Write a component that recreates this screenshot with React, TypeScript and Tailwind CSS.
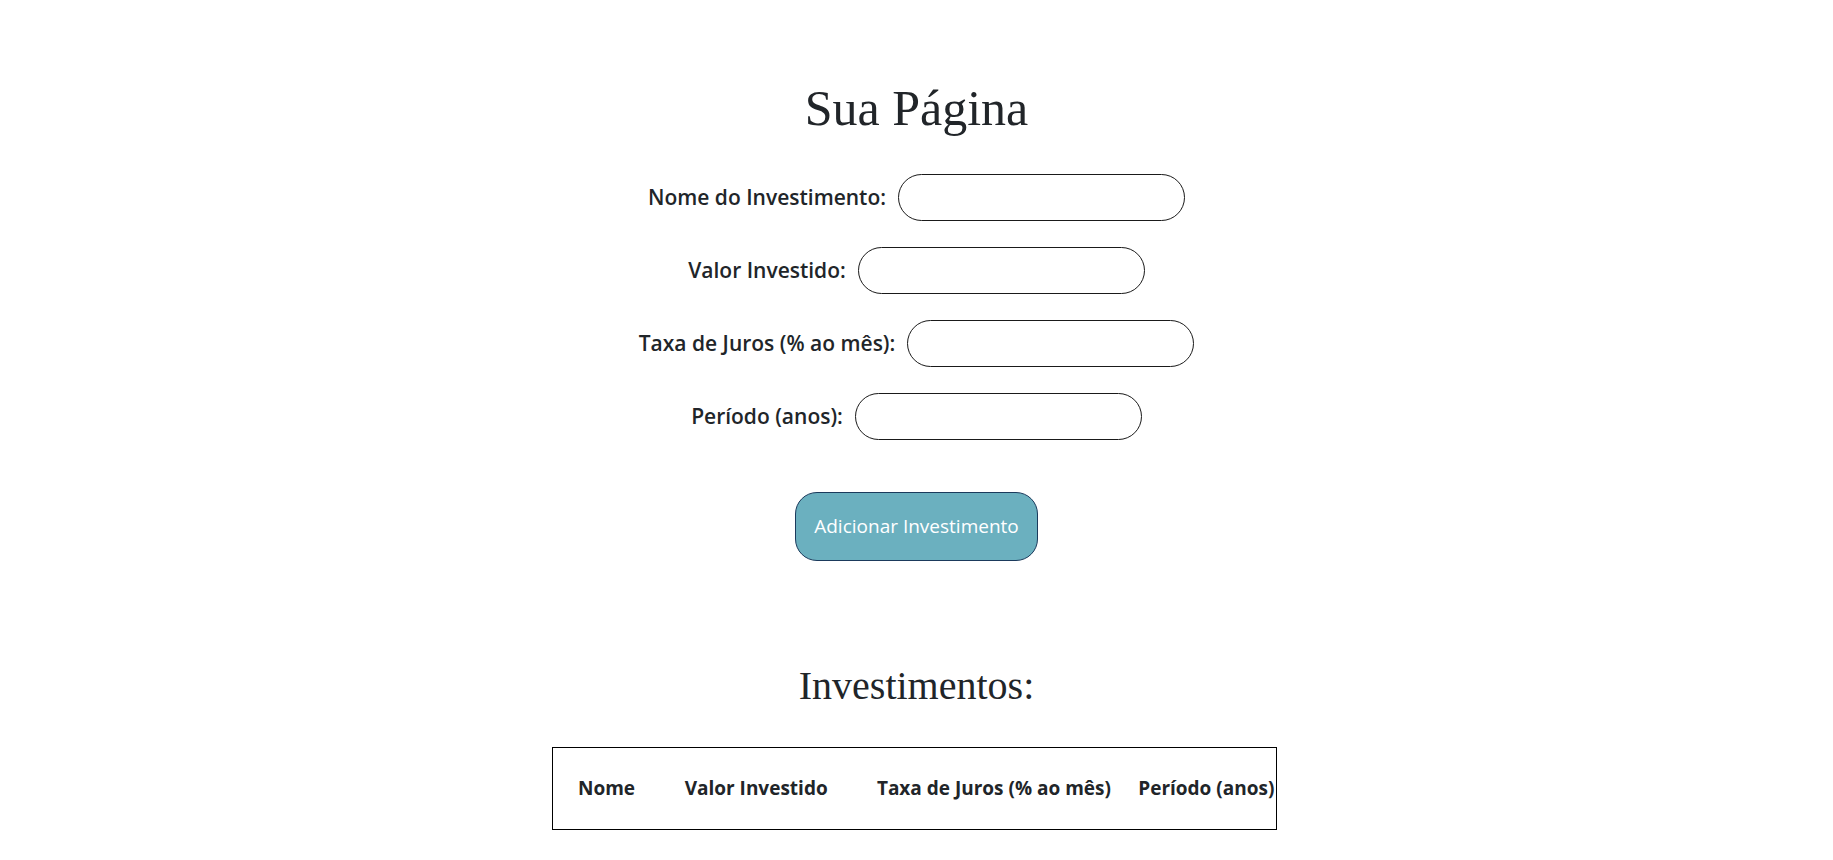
const fields = [
  { label: "Nome do Investimento:", name: "nome" },
  { label: "Valor Investido:", name: "valor" },
  { label: "Taxa de Juros (% ao mês):", name: "taxa" },
  { label: "Período (anos):", name: "periodo" },
];

const columns = [
  { title: "Nome", width: "w-[107px]" },
  { title: "Valor Investido", width: "w-[192px]" },
  { title: "Taxa de Juros (% ao mês)", width: "w-[261px]" },
  { title: "Período (anos)", width: "w-[163px]" },
];

export default function App() {
  return (
    <div className="min-h-screen bg-white text-[#212529] font-['Open_Sans',sans-serif]">
      <div className="flex flex-col items-center pt-[83px]">
        {/* TITLE */}
        <h1 className="font-['Liberation_Serif',serif] text-[50px] leading-none">
          Sua Página
        </h1>

        {/* FORM */}
        <form className="mt-[41px] flex flex-col items-center gap-[26px]">
          {fields.map((f) => (
            <div key={f.name} className="flex items-center gap-3">
              <label htmlFor={f.name} className="text-[21px] font-semibold">
                {f.label}
              </label>
              <input
                id={f.name}
                type="text"
                className="w-[287px] h-[47px] rounded-full border border-[#1a1a1a] px-4 outline-none"
              />
            </div>
          ))}

          <button
            type="button"
            className="mt-[26px] w-[243px] h-[69px] rounded-[22px] border border-[#1b3a5c] bg-[#6bb0bf] text-white text-[19px]"
          >
            Adicionar Investimento
          </button>
        </form>

        {/* LIST */}
        <h2 className="mt-[105px] font-['Liberation_Serif',serif] text-[40px] leading-none">
          Investimentos:
        </h2>

        <table className="mt-[41px] mr-[4px] w-[725px] table-fixed border border-black border-collapse">
          <thead>
            <tr>
              {columns.map((c) => (
                <th
                  key={c.title}
                  className={`${c.width} h-[82px] pl-[25px] text-left text-[19px] font-bold whitespace-nowrap`}
                >
                  {c.title}
                </th>
              ))}
            </tr>
          </thead>
        </table>
      </div>
    </div>
  );
}
